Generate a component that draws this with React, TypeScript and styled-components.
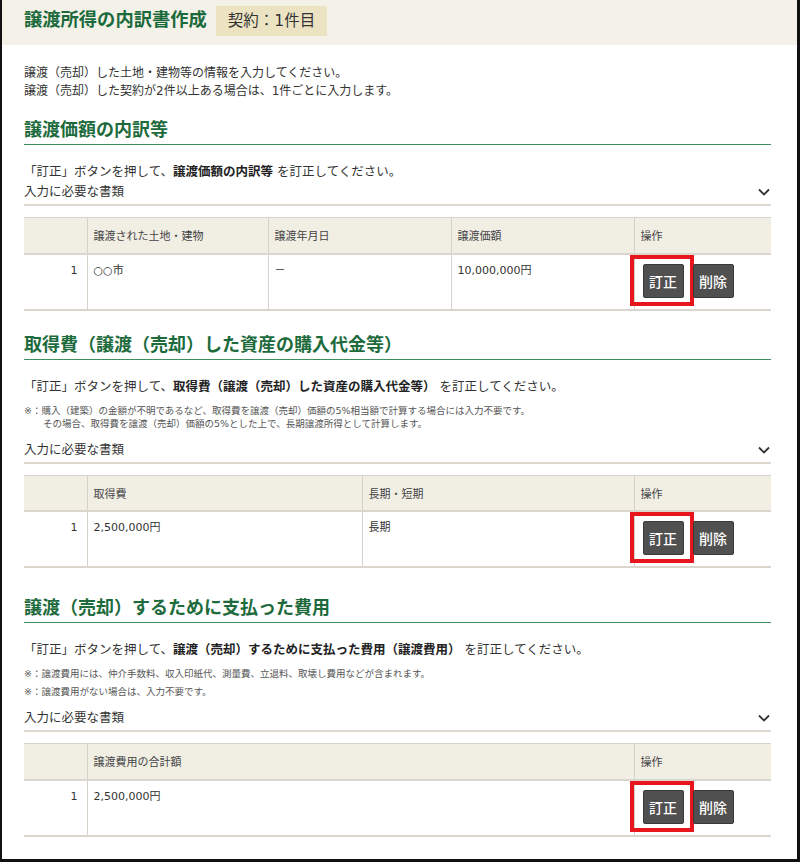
import React from 'react';
import styled, { createGlobalStyle } from 'styled-components';

const GlobalStyle = createGlobalStyle`
  html, body { margin: 0; padding: 0; background: #fff; }
  body {
    font-family: "DejaVu Sans", "Noto Sans CJK JP", sans-serif;
    color: #333;
  }
  * { box-sizing: border-box; }
`;

const Frame = styled.div`
  width: 800px;
  height: 862px;
  border-left: 2px solid #111;
  border-right: 3px solid #111;
  border-bottom: 3px solid #111;
  overflow: hidden;
  background: #fff;
`;

const Header = styled.header`
  display: flex;
  align-items: flex-start;
  gap: 9px;
  height: 45px;
  padding: 6px 22px 0;
  background: #f4f1e9;
`;

const Title = styled.h1`
  margin: 0;
  font-family: "Noto Sans CJK JP", sans-serif;
  font-size: 18.3px;
  font-weight: 700;
  line-height: 25px;
  color: #1b6a3b;
`;

const Badge = styled.span`
  display: inline-block;
  height: 30px;
  padding: 0 12px;
  line-height: 30px;
  font-size: 15.5px;
  background: #ece3c3;
  color: #333;
`;

const Content = styled.main`
  padding: 0 26px 0 22px;
`;

const Intro = styled.p`
  margin: 19px 0 0;
  font-size: 12px;
  line-height: 18px;
  color: #333;
`;

const Section = styled.section<{ $gap: number }>`
  margin-top: ${(p) => p.$gap}px;
`;

const Heading = styled.h2`
  margin: 0;
  padding-bottom: 4px;
  font-family: "Noto Sans CJK JP", sans-serif;
  font-size: 18px;
  font-weight: 700;
  line-height: 24px;
  color: #1d6b3d;
  border-bottom: 1px solid #3d8f5f;
`;

const Instruction = styled.p`
  margin: 17px 0 0;
  font-size: 12.5px;
  line-height: 20px;
  color: #333;

  strong {
    font-weight: 700;
    color: #222;
  }
`;

const Notes = styled.div`
  display: flex;
  flex-direction: column;
  gap: 5px;
  padding: 7px 0 10px;
`;

const Note = styled.p`
  margin: 0;
  padding-left: 19px;
  text-indent: -19px;
  font-size: 9.5px;
  line-height: 13px;
  color: #555;
`;

const Toggle = styled.div`
  display: flex;
  align-items: center;
  justify-content: space-between;
  padding-bottom: 2px;
  font-size: 12.5px;
  line-height: 20px;
  color: #333;
  border-bottom: 2px solid #dcd8d0;
`;

const Chevron = styled.svg`
  width: 12px;
  height: 8px;
  margin-right: 1px;
`;

const Table = styled.table`
  width: 100%;
  margin-top: 11px;
  border-collapse: collapse;
  table-layout: fixed;
`;

const HeadCell = styled.th<{ $w?: number; $index?: boolean }>`
  ${(p) => (p.$w ? `width: ${p.$w}px;` : '')}
  height: 36px;
  padding: 0 6px;
  background: #f1eee4;
  font-size: 11px;
  font-weight: 400;
  text-align: left;
  color: #444;
  border-top: 1px solid #d6d2ca;
  border-bottom: 2px solid #dad6ce;
  border-left: ${(p) => (p.$index ? 'none' : '1px solid #d6d2ca')};
`;

const Cell = styled.td<{ $index?: boolean }>`
  height: 56px;
  padding: 8px ${(p) => (p.$index ? '9px' : '6px')} 0 ${(p) => (p.$index ? '0' : '6px')};
  vertical-align: top;
  font-size: 11px;
  line-height: 16px;
  color: #333;
  text-align: ${(p) => (p.$index ? 'right' : 'left')};
  border-bottom: 2px solid #dad6ce;
  border-left: ${(p) => (p.$index ? 'none' : '1px solid #d6d2ca')};
`;

const ActionCell = styled.td`
  height: 56px;
  padding: 9px 0 0 8px;
  vertical-align: top;
  border-bottom: 2px solid #dad6ce;
  border-left: 1px solid #d6d2ca;
`;

const Actions = styled.div`
  display: flex;
  gap: 9px;
`;

const ActionButton = styled.button<{ $highlight?: boolean }>`
  position: relative;
  width: 41px;
  height: 34px;
  padding: 0;
  font-family: "Noto Sans CJK JP", sans-serif;
  font-size: 14px;
  font-weight: 500;
  color: #fff;
  background: #505050;
  border: 1px solid #3a3a3a;
  border-radius: 2px;
  cursor: pointer;

  ${(p) =>
    p.$highlight
      ? `
  &::after {
    content: "";
    position: absolute;
    left: -14px;
    top: -10px;
    right: -11px;
    bottom: -9px;
    border: 4px solid #e8151d;
    pointer-events: none;
  }`
      : ''}
`;

const ChevronIcon = () => (
  <Chevron viewBox="0 0 12 8" aria-hidden="true">
    <path d="M1 1.5 L6 6.5 L11 1.5" fill="none" stroke="#333" strokeWidth="1.8" />
  </Chevron>
);

type Col = { label: string; width?: number };

const DataTable: React.FC<{ cols: Col[]; values: string[] }> = ({ cols, values }) => (
  <Table>
    <thead>
      <tr>
        <HeadCell $w={63} $index />
        {cols.map((c) => (
          <HeadCell key={c.label} $w={c.width}>
            {c.label}
          </HeadCell>
        ))}
        <HeadCell $w={137}>操作</HeadCell>
      </tr>
    </thead>
    <tbody>
      <tr>
        <Cell $index>1</Cell>
        {values.map((v, i) => (
          <Cell key={i}>{v}</Cell>
        ))}
        <ActionCell>
          <Actions>
            <ActionButton $highlight>訂正</ActionButton>
            <ActionButton>削除</ActionButton>
          </Actions>
        </ActionCell>
      </tr>
    </tbody>
  </Table>
);

const Docs = () => (
  <Toggle>
    <span>入力に必要な書類</span>
    <ChevronIcon />
  </Toggle>
);

export default function App() {
  return (
    <>
      <GlobalStyle />
      <Frame>
        <Header>
          <Title>譲渡所得の内訳書作成</Title>
          <Badge>契約：1件目</Badge>
        </Header>
        <Content>
          <Intro>
            譲渡（売却）した土地・建物等の情報を入力してください。
            <br />
            譲渡（売却）した契約が2件以上ある場合は、1件ごとに入力します。
          </Intro>

          <Section $gap={16}>
            <Heading>譲渡価額の内訳等</Heading>
            <Instruction>
              「訂正」ボタンを押して、<strong>譲渡価額の内訳等</strong> を訂正してください。
            </Instruction>
            <Docs />
            <DataTable
              cols={[
                { label: '譲渡された土地・建物', width: 181 },
                { label: '譲渡年月日', width: 183 },
                { label: '譲渡価額' },
              ]}
              values={['○○市', '－', '10,000,000円']}
            />
          </Section>

          <Section $gap={20}>
            <Heading>取得費（譲渡（売却）した資産の購入代金等）</Heading>
            <Instruction>
              「訂正」ボタンを押して、<strong>取得費（譲渡（売却）した資産の購入代金等）</strong> を訂正してください。
            </Instruction>
            <Notes>
              <Note>
                ※：購入（建築）の金額が不明であるなど、取得費を譲渡（売却）価額の5%相当額で計算する場合には入力不要です。
                <br />
                その場合、取得費を譲渡（売却）価額の5%とした上で、長期譲渡所得として計算します。
              </Note>
            </Notes>
            <Docs />
            <DataTable
              cols={[{ label: '取得費', width: 275 }, { label: '長期・短期' }]}
              values={['2,500,000円', '長期']}
            />
          </Section>

          <Section $gap={26}>
            <Heading>譲渡（売却）するために支払った費用</Heading>
            <Instruction>
              「訂正」ボタンを押して、<strong>譲渡（売却）するために支払った費用（譲渡費用）</strong> を訂正してください。
            </Instruction>
            <Notes>
              <Note>※：譲渡費用には、仲介手数料、収入印紙代、測量費、立退料、取壊し費用などが含まれます。</Note>
              <Note>※：譲渡費用がない場合は、入力不要です。</Note>
            </Notes>
            <Docs />
            <DataTable cols={[{ label: '譲渡費用の合計額' }]} values={['2,500,000円']} />
          </Section>
        </Content>
      </Frame>
    </>
  );
}
